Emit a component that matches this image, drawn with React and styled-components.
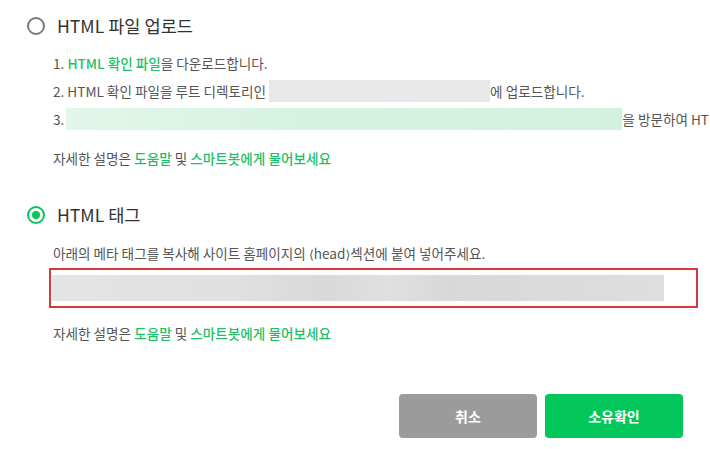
import React from "react";
import styled, { createGlobalStyle } from "styled-components";

const Global = createGlobalStyle`
  html, body { margin: 0; padding: 0; background: #fff; }
  body {
    font-family: "Noto Sans CJK KR", "Noto Sans", sans-serif;
    color: #555;
    overflow: hidden;
  }
`;

const Page = styled.div`
  width: 710px;
  height: 449px;
  box-sizing: border-box;
  padding: 16px 0 0 27px;
  overflow: hidden;
  display: flex;
  flex-direction: column;
`;

const Section = styled.section`
  display: flex;
  flex-direction: column;
  margin-top: ${(p) => p.$top || 0}px;
`;

const OptionRow = styled.label`
  display: flex;
  align-items: center;
  gap: 12px;
  height: 20px;
`;

const Radio = styled.span`
  box-sizing: border-box;
  width: 18px;
  height: 18px;
  border-radius: 50%;
  border: 2px solid ${(p) => (p.$checked ? "#03c75a" : "#7a7a7a")};
  display: flex;
  align-items: center;
  justify-content: center;
  flex: none;
  &::after {
    content: "";
    width: 8px;
    height: 8px;
    border-radius: 50%;
    background: ${(p) => (p.$checked ? "#03c75a" : "transparent")};
  }
`;

const OptionTitle = styled.span`
  font-size: 17.6px;
  color: #333;
  line-height: 20px;
  white-space: nowrap;
`;

const Body = styled.div`
  padding-left: 26px;
  display: flex;
  flex-direction: column;
`;

const Steps = styled.ol`
  list-style: none;
  margin: 16px 0 0;
  padding: 0;
  display: flex;
  flex-direction: column;
  gap: 6px;
`;

const Step = styled.li`
  display: flex;
  align-items: center;
  height: 22px;
  font-size: 13.6px;
  white-space: nowrap;
  color: #555;
`;

const Green = styled.span`
  color: #1fbf68;
  font-weight: 500;
`;

const Blur = styled.span`
  display: inline-block;
  height: 22px;
  width: ${(p) => p.$w}px;
  background: ${(p) => p.$bg};
  margin: 0 ${(p) => p.$mr || 0}px 0 ${(p) => p.$ml || 0}px;
  flex: none;
`;

const Help = styled.p`
  margin: ${(p) => p.$top}px 0 0;
  font-size: 13.6px;
  line-height: 20px;
  color: #555;
  white-space: nowrap;
`;

const Desc = styled.p`
  margin: 18px 0 0;
  font-size: 13.6px;
  line-height: 20px;
  color: #555;
  white-space: nowrap;
`;

const Angle = styled.span`
  font-family: "DejaVu Sans", "Noto Sans", sans-serif;
  font-size: 12.5px;
`;

const TagBox = styled.div`
  margin: 3px 0 0 -4px;
  width: 649px;
  height: 40px;
  box-sizing: border-box;
  border: 2px solid #d8383d;
  padding: 5px 32px 5px 1px;
  display: flex;
`;

const TagValue = styled.div`
  flex: 1;
  background: linear-gradient(
    90deg,
    #e4e4e4 0%,
    #e0e0e0 30%,
    #d9d9d9 45%,
    #e0e0e0 55%,
    #d8d8d8 65%,
    #dedede 100%
  );
`;

const Footer = styled.div`
  display: flex;
  justify-content: flex-end;
  gap: 8px;
  margin-top: 51px;
  padding-right: 27px;
`;

const Button = styled.button`
  width: 138px;
  height: 44px;
  border: none;
  border-radius: 4px;
  background: ${(p) => (p.$primary ? "#03c75a" : "#9b9b9b")};
  color: #fff;
  font-family: inherit;
  font-size: 14px;
  font-weight: 700;
  cursor: pointer;
`;

export default function App() {
  return (
    <>
      <Global />
      <Page>
        <Section>
          <OptionRow>
            <Radio />
            <OptionTitle>HTML 파일 업로드</OptionTitle>
          </OptionRow>
          <Body>
            <Steps>
              <Step>
                1.&nbsp;<Green>HTML 확인 파일</Green>을 다운로드합니다.
              </Step>
              <Step>
                2. HTML 확인 파일을 루트 디렉토리인
                <Blur $w={221} $bg="#e8e8e8" $ml={3} />
                에 업로드합니다.
              </Step>
              <Step>
                3.
                <Blur
                  $w={556}
                  $bg="linear-gradient(90deg,#e2f6ea,#d6f3e2 40%,#d2f2df)"
                  $ml={2}
                />
                을 방문하여 HTML 확인 파일이 정상적으로 업로드되었는지 확인합니다.
              </Step>
            </Steps>
            <Help $top={18}>
              자세한 설명은 <Green>도움말</Green> 및 <Green>스마트봇에게 물어보세요</Green>
            </Help>
          </Body>
        </Section>

        <Section $top={37}>
          <OptionRow>
            <Radio $checked />
            <OptionTitle>HTML 태그</OptionTitle>
          </OptionRow>
          <Body>
            <Desc>
              아래의 메타 태그를 복사해 사이트 홈페이지의 <Angle>⟨</Angle>head<Angle>⟩</Angle>섹션에 붙여 넣어주세요.
            </Desc>
            <TagBox>
              <TagValue />
            </TagBox>
            <Help $top={15}>
              자세한 설명은 <Green>도움말</Green> 및 <Green>스마트봇에게 물어보세요</Green>
            </Help>
          </Body>
        </Section>

        <Footer>
          <Button type="button">취소</Button>
          <Button type="button" $primary>
            소유확인
          </Button>
        </Footer>
      </Page>
    </>
  );
}
